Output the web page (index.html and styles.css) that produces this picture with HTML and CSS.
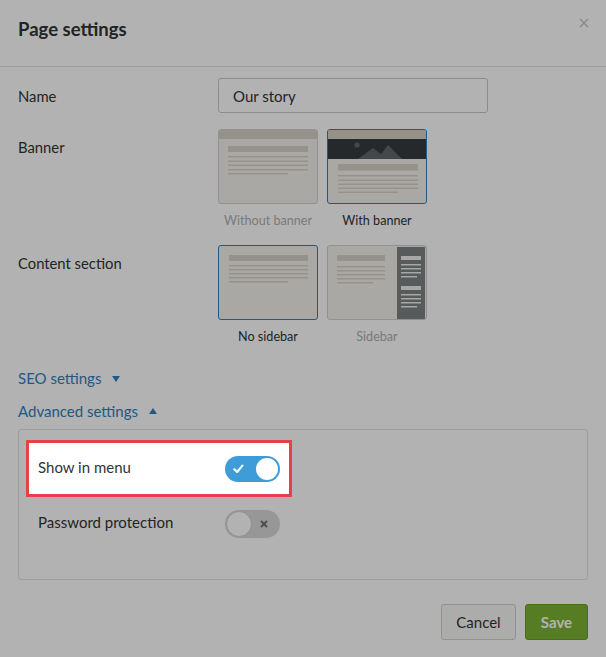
FILE: index.html
```html
<!DOCTYPE html>
<html lang="en">
<head>
<meta charset="utf-8">
<title>Page settings</title>
<link rel="stylesheet" href="styles.css">
</head>
<body>
<div class="modal">
  <header class="modal-header">
    <h1 class="modal-title">Page settings</h1>
    <button class="close" aria-label="Close">
      <svg width="10" height="10" viewBox="0 0 10 10"><path d="M1 1L9 9M9 1L1 9" stroke="#c4c4c4" stroke-width="1.4" fill="none"/></svg>
    </button>
  </header>

  <div class="modal-body">
    <div class="field field-center">
      <label class="field-label">Name</label>
      <input class="text-input" type="text" value="Our story">
    </div>

    <div class="field field-top">
      <span class="field-label label-top">Banner</span>
      <div class="options">
        <div class="option">
          <div class="thumb">
            <svg width="98" height="73" viewBox="0 0 98 73">
              <rect x="0" y="0" width="98" height="9" class="bar"/>
              <rect x="9" y="16" width="80" height="6" class="bar"/>
              <rect x="9" y="26" width="80" height="1.5" class="bar"/>
              <rect x="9" y="30.5" width="80" height="1.5" class="bar"/>
              <rect x="9" y="34.5" width="80" height="1.5" class="bar"/>
              <rect x="9" y="39" width="80" height="1.5" class="bar"/>
              <rect x="9" y="43" width="60" height="1.5" class="bar"/>
            </svg>
          </div>
          <span class="caption muted">Without banner</span>
        </div>
        <div class="option">
          <div class="thumb selected">
            <svg width="98" height="73" viewBox="0 0 98 73">
              <rect x="0" y="0" width="98" height="9" class="bar"/>
              <rect x="0" y="9" width="98" height="20" class="banner"/>
              <circle cx="29" cy="15" r="2.6" class="mount"/>
              <path d="M30 29L45 18L53 24L60 15L74 29Z" class="mount"/>
              <rect x="10" y="34" width="80" height="6.5" class="bar"/>
              <rect x="10" y="45" width="80" height="1.5" class="bar"/>
              <rect x="10" y="49.5" width="80" height="1.5" class="bar"/>
              <rect x="10" y="53.5" width="80" height="1.5" class="bar"/>
              <rect x="10" y="57.5" width="80" height="1.5" class="bar"/>
              <rect x="10" y="61.5" width="60" height="1.5" class="bar"/>
            </svg>
          </div>
          <span class="caption">With banner</span>
        </div>
      </div>
    </div>

    <div class="field field-top field-content">
      <span class="field-label label-top">Content section</span>
      <div class="options">
        <div class="option">
          <div class="thumb selected">
            <svg width="98" height="73" viewBox="0 0 98 73">
              <rect x="10" y="9" width="79" height="6" class="bar"/>
              <rect x="10" y="19" width="79" height="1.5" class="bar"/>
              <rect x="10" y="23" width="79" height="1.5" class="bar"/>
              <rect x="10" y="27" width="79" height="1.5" class="bar"/>
              <rect x="10" y="31" width="79" height="1.5" class="bar"/>
              <rect x="10" y="35" width="59" height="1.5" class="bar"/>
            </svg>
          </div>
          <span class="caption">No sidebar</span>
        </div>
        <div class="option">
          <div class="thumb">
            <svg width="98" height="73" viewBox="0 0 98 73">
              <rect x="9" y="9" width="48" height="6" class="bar"/>
              <rect x="9" y="20" width="48" height="1.5" class="bar"/>
              <rect x="9" y="24" width="48" height="1.5" class="bar"/>
              <rect x="9" y="28" width="48" height="1.5" class="bar"/>
              <rect x="9" y="32" width="48" height="1.5" class="bar"/>
              <rect x="9" y="36" width="36" height="1.5" class="bar"/>
              <rect x="69" y="1" width="28" height="72" class="side"/>
              <rect x="73" y="10" width="20" height="4" class="side-bar"/>
              <rect x="73" y="18" width="20" height="1.5" class="side-bar"/>
              <rect x="73" y="22" width="20" height="1.5" class="side-bar"/>
              <rect x="73" y="26" width="20" height="1.5" class="side-bar"/>
              <rect x="73" y="30" width="16" height="1.5" class="side-bar"/>
              <rect x="73" y="40" width="20" height="4" class="side-bar"/>
              <rect x="73" y="48" width="20" height="1.5" class="side-bar"/>
              <rect x="73" y="52" width="20" height="1.5" class="side-bar"/>
              <rect x="73" y="56" width="20" height="1.5" class="side-bar"/>
              <rect x="73" y="60" width="16" height="1.5" class="side-bar"/>
            </svg>
          </div>
          <span class="caption muted">Sidebar</span>
        </div>
      </div>
    </div>

    <div class="disclosure disclosure-seo">SEO settings <span class="caret caret-down"></span></div>
    <div class="disclosure disclosure-adv">Advanced settings <span class="caret caret-up"></span></div>

    <div class="panel">
      <div class="switch-row highlight">
        <span class="switch-label">Show in menu</span>
        <span class="switch on">
          <svg class="check" width="11" height="10" viewBox="0 0 11 10"><path d="M1.3 5.3L4.1 8L9.4 1.6" stroke="#fff" stroke-width="2.1" fill="none" stroke-linecap="round" stroke-linejoin="round"/></svg>
          <span class="knob"></span>
        </span>
      </div>
      <div class="switch-row second">
        <span class="switch-label">Password protection</span>
        <span class="switch off">
          <span class="knob"></span>
          <svg class="cross" width="8" height="8" viewBox="0 0 8 8"><path d="M1 1L7 7M7 1L1 7" stroke="#6a6a6a" stroke-width="1.8" fill="none"/></svg>
        </span>
      </div>
    </div>
  </div>

  <footer class="modal-footer">
    <button class="btn btn-cancel">Cancel</button>
    <button class="btn btn-save">Save</button>
  </footer>
</div>
<div class="overlay"></div>
</body>
</html>
```

FILE: styles.css
```css
* { box-sizing: border-box; }

html, body {
  margin: 0;
  padding: 0;
  background: #ffffff;
}

body {
  font-family: Lato, "Open Sans", Arial, sans-serif;
  color: #333333;
  font-size: 14px;
}

.modal {
  width: 606px;
  height: 657px;
  background: #ffffff;
}

.modal-header {
  height: 67px;
  border-bottom: 1px solid #e3e3e3;
  display: flex;
  align-items: center;
  justify-content: space-between;
  padding: 0 14px 0 18px;
}

.modal-title {
  margin: 0;
  font-size: 18.5px;
  font-weight: 700;
  color: #333333;
  padding-bottom: 8px;
}

.close {
  border: 0;
  background: none;
  padding: 0;
  width: 16px;
  height: 16px;
  display: flex;
  align-items: center;
  justify-content: center;
  margin-bottom: 20px;
}

.modal-body {
  padding: 11px 18px 0 18px;
}

.field {
  display: grid;
  grid-template-columns: 200px 1fr;
}

.field-center { align-items: center; }
.field-top { align-items: start; margin-top: 16px; }
.field-content { margin-top: 15px; }

.field-label {
  font-size: 14.8px;
  line-height: 20px;
  color: #333333;
}

.label-top { padding-top: 8px; }

.text-input {
  width: 270px;
  height: 35px;
  border: 1px solid #c9c9c9;
  border-radius: 3px;
  padding: 0 14px;
  font-family: inherit;
  font-size: 15px;
  color: #333333;
  background: #ffffff;
  outline: none;
}

.options {
  display: flex;
  gap: 9px;
}

.option {
  display: flex;
  flex-direction: column;
  align-items: center;
  width: 100px;
}

.thumb {
  width: 100px;
  height: 75px;
  border: 1px solid #d0d0d0;
  border-radius: 3px;
  background: #f4f1eb;
  overflow: hidden;
}

.thumb svg { display: block; }

.thumb.selected { border-color: #2d81c2; }

.bar { fill: #d6d1c9; }
.banner { fill: #363c40; }
.mount { fill: #61666a; }
.side { fill: #7f8383; }
.side-bar { fill: #efefec; }

.caption {
  margin-top: 8px;
  font-size: 12.6px;
  line-height: 18px;
  color: #333333;
  white-space: nowrap;
}

.caption.muted { color: #b0b0b0; }

.disclosure {
  font-size: 15px;
  line-height: 20px;
  color: #2d81c2;
  display: flex;
  align-items: center;
  gap: 11px;
}

.disclosure-seo { margin-top: 22px; }
.disclosure-adv { margin-top: 13px; }

.caret {
  width: 0;
  height: 0;
  border-left: 4.5px solid transparent;
  border-right: 4.5px solid transparent;
}
.caret-down { border-top: 6px solid #2d81c2; margin-top: 1px; }
.caret-up { border-bottom: 6px solid #2d81c2; }

.panel {
  margin-top: 8px;
  border: 1px solid #e3e3e3;
  border-radius: 3px;
  height: 151px;
  padding: 10px 7px 0 7px;
}

.switch-row {
  width: 266px;
  height: 57px;
  border: 3px solid transparent;
  display: flex;
  align-items: center;
  justify-content: space-between;
  padding: 0 9px;
}

.switch-row.second { margin-top: -2px; }

.switch-row.highlight {
  position: relative;
  z-index: 2;
  background: #ffffff;
  border-color: #e8404b;
}

.switch-label {
  font-size: 15px;
  line-height: 20px;
  color: #333333;
  padding-bottom: 3px;
}

.switch {
  width: 55px;
  height: 26px;
  border-radius: 13px;
  display: flex;
  align-items: center;
  flex-shrink: 0;
}

.switch.on {
  background: #3e9dd8;
  padding: 0 2px 0 8px;
  justify-content: space-between;
}

.switch.on .knob {
  width: 22px;
  height: 22px;
  border-radius: 50%;
  background: #ffffff;
}

.switch.off {
  height: 28px;
  border-radius: 14px;
  background: #d8d8d8;
  padding: 0 12px 0 1px;
  justify-content: space-between;
}

.switch.off .knob {
  width: 26px;
  height: 26px;
  border-radius: 50%;
  background: #ffffff;
  border: 1px solid #cfcfcf;
}

.check, .cross { display: block; }

.modal-footer {
  display: flex;
  justify-content: flex-end;
  gap: 9px;
  padding: 24px 18px 0 0;
}

.btn {
  height: 36px;
  border-radius: 3px;
  font-family: inherit;
  font-size: 15px;
  padding: 0;
  cursor: pointer;
}

.btn-cancel {
  width: 75px;
  background: #f7f7f5;
  border: 1px solid #d2d2d2;
  color: #333333;
}

.btn-save {
  width: 63px;
  background: #7bb334;
  border: 1px solid #6a9d2a;
  color: #ffffff;
  font-weight: 700;
}

.overlay {
  position: fixed;
  inset: 0;
  background: rgba(0, 0, 0, 0.3);
  z-index: 1;
}
```
